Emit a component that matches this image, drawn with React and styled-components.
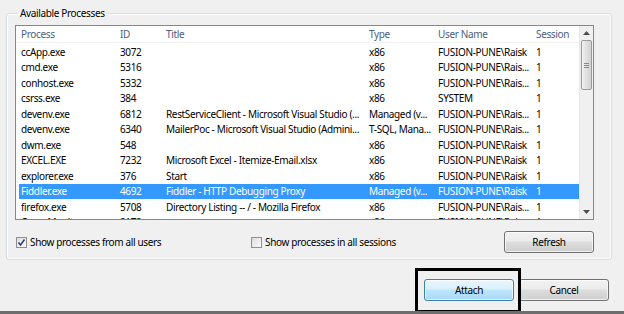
import styled, { createGlobalStyle } from "styled-components";

const GlobalStyle = createGlobalStyle`
  html, body {
    margin: 0;
    padding: 0;
    background: #f0f0f0;
  }
  body {
    font-family: "Noto Sans", "Open Sans", sans-serif;
    font-size: 10px;
    letter-spacing: -0.35px;
    color: #000;
  }
  * { box-sizing: border-box; }
`;

const processes = [
  ["ccApp.exe", "3072", "", "x86", "FUSION-PUNE\\Raisk", "1"],
  ["cmd.exe", "5316", "", "x86", "FUSION-PUNE\\Rais...", "1"],
  ["conhost.exe", "5332", "", "x86", "FUSION-PUNE\\Rais...", "1"],
  ["csrss.exe", "384", "", "x86", "SYSTEM", "1"],
  ["devenv.exe", "6812", "RestServiceClient - Microsoft Visual Studio (...", "Managed (v...", "FUSION-PUNE\\Rais...", "1"],
  ["devenv.exe", "6340", "MailerPoc - Microsoft Visual Studio (Admini...", "T-SQL, Mana...", "FUSION-PUNE\\Rais...", "1"],
  ["dwm.exe", "548", "", "x86", "FUSION-PUNE\\Raisk", "1"],
  ["EXCEL.EXE", "7232", "Microsoft Excel - Itemize-Email.xlsx", "x86", "FUSION-PUNE\\Raisk", "1"],
  ["explorer.exe", "376", "Start", "x86", "FUSION-PUNE\\Raisk", "1"],
  ["Fiddler.exe", "4692", "Fiddler - HTTP Debugging Proxy", "Managed (v...", "FUSION-PUNE\\Raisk", "1"],
  ["firefox.exe", "5708", "Directory Listing -- / - Mozilla Firefox", "x86", "FUSION-PUNE\\Rais...", "1"],
  ["CompMonitor.exe", "2172", "", "x86", "FUSION-PUNE\\Rais...", "1"],
];

const SELECTED = 9;

const Dialog = styled.div`
  position: relative;
  width: 624px;
  height: 314px;
  overflow: hidden;
  padding: 6px 12px 0 6px;
  display: flex;
  flex-direction: column;
  border-bottom: 3px solid #6e6e6e;
`;

const Group = styled.fieldset`
  margin: 0;
  height: 254px;
  padding: 5px 17px 0 8px;
  border: 1px solid #d5dfe5;
  border-radius: 3px;
  box-shadow: inset 0 0 0 1px #fff;
  display: flex;
  flex-direction: column;
`;

const Legend = styled.legend`
  padding: 0 2px;
  margin-left: 3px;
  line-height: 14px;
  color: #000;
`;

const ListView = styled.div`
  height: 195px;
  border: 1px solid #828790;
  background: #fff;
  display: flex;
  overflow: hidden;
`;

const ListBody = styled.div`
  flex: 1;
  overflow: hidden;
`;

const cols = "99px 46px 203px 69px 98px 1fr";

const Header = styled.div`
  display: grid;
  grid-template-columns: ${cols};
  height: 17px;
  align-items: center;
  padding-left: 4px;
  color: #4c607a;
  border-bottom: 1px solid #f2f2f2;
  margin-bottom: 1px;
`;

const Row = styled.div`
  display: grid;
  grid-template-columns: ${cols};
  height: 15.5px;
  align-items: center;
  margin-left: 3px;
  padding-left: 1px;
  white-space: nowrap;
  background: ${(p) => (p.selected ? "#3399ff" : "transparent")};
  color: ${(p) => (p.selected ? "#fff" : "#000")};
`;

const Cell = styled.span`
  overflow: hidden;
  white-space: nowrap;
  padding-left: 1px;
`;

const ScrollBar = styled.div`
  width: 14px;
  background: #f0f0f0;
  border-left: 1px solid #e6e6e6;
  display: flex;
  flex-direction: column;
  align-items: center;
`;

const Arrow = styled.div`
  height: 14px;
  width: 100%;
  display: flex;
  align-items: center;
  justify-content: center;
`;

const Thumb = styled.div`
  width: 11px;
  height: 50px;
  border: 1px solid #9a9a9a;
  border-radius: 2px;
  background: linear-gradient(90deg, #f2f2f2, #e0e0e0 50%, #d2d2d2);
  display: flex;
  flex-direction: column;
  align-items: center;
  justify-content: center;
  gap: 1px;
`;

const Grip = styled.span`
  width: 5px;
  height: 1px;
  background: #8a8a8a;
`;

const Track = styled.div`
  flex: 1;
`;

const OptionsRow = styled.div`
  display: flex;
  align-items: center;
  margin-top: 11px;
`;

const CheckLabel = styled.label`
  display: flex;
  align-items: center;
  gap: 3px;
  margin-left: 1px;
  width: ${(p) => p.width || "auto"};
  color: #000;
`;

const Box = styled.span`
  width: 11px;
  height: 11px;
  border: 1px solid #8f8f8f;
  background: linear-gradient(135deg, #dcdcdc, #fbfbfb);
  display: flex;
  align-items: center;
  justify-content: center;
`;

const Button = styled.button`
  font: inherit;
  letter-spacing: inherit;
  color: #000;
  width: ${(p) => p.width || "90px"};
  height: 22px;
  border-radius: 3px;
  border: 1px solid ${(p) => (p.primary ? "#3c7fb1" : "#707070")};
  background: ${(p) =>
    p.primary
      ? "linear-gradient(#eaf6fd 0%, #d9f0fc 45%, #bee6fd 50%, #a7d9f5 100%)"
      : "linear-gradient(#f2f2f2 0%, #ebebeb 45%, #dddddd 50%, #cfcfcf 100%)"};
  box-shadow: inset 0 0 0 1px rgba(255, 255, 255, 0.7);
  padding: 0;
`;

const Spacer = styled.div`
  flex: 1;
`;

const Footer = styled.div`
  display: flex;
  justify-content: flex-end;
  gap: 5px;
  margin-top: 19px;
  margin-right: 3px;
`;

const Highlight = styled.div`
  position: absolute;
  left: 415px;
  top: 268px;
  width: 106px;
  height: 45px;
  border: 3px solid #000;
  pointer-events: none;
`;

const Check = () => (
  <svg width="9" height="9" viewBox="0 0 9 9">
    <path d="M1.5 4.5 L3.5 7 L7.5 1.5" fill="none" stroke="#2a3f73" strokeWidth="1.5" />
  </svg>
);

const Tri = ({ up }) => (
  <svg width="7" height="4" viewBox="0 0 7 4">
    <path d={up ? "M0 4 L3.5 0 L7 4 Z" : "M0 0 L3.5 4 L7 0 Z"} fill="#4d4d4d" />
  </svg>
);

export default function App() {
  return (
    <>
      <GlobalStyle />
      <Dialog>
        <Group>
          <Legend>Available Processes</Legend>
          <ListView>
            <ListBody>
              <Header>
                <Cell>Process</Cell>
                <Cell>ID</Cell>
                <Cell>Title</Cell>
                <Cell>Type</Cell>
                <Cell>User Name</Cell>
                <Cell>Session</Cell>
              </Header>
              {processes.map((p, i) => (
                <Row key={i} selected={i === SELECTED}>
                  {p.map((c, j) => (
                    <Cell key={j}>{c}</Cell>
                  ))}
                </Row>
              ))}
            </ListBody>
            <ScrollBar>
              <Arrow>
                <Tri up />
              </Arrow>
              <Thumb>
                <Grip />
                <Grip />
                <Grip />
              </Thumb>
              <Track />
              <Arrow>
                <Tri />
              </Arrow>
            </ScrollBar>
          </ListView>
          <OptionsRow>
            <CheckLabel width="234px">
              <Box>
                <Check />
              </Box>
              Show processes from all users
            </CheckLabel>
            <CheckLabel>
              <Box />
              Show processes in all sessions
            </CheckLabel>
            <Spacer />
            <Button>Refresh</Button>
          </OptionsRow>
        </Group>
        <Footer>
          <Button primary>Attach</Button>
          <Button>Cancel</Button>
        </Footer>
        <Highlight />
      </Dialog>
    </>
  );
}
